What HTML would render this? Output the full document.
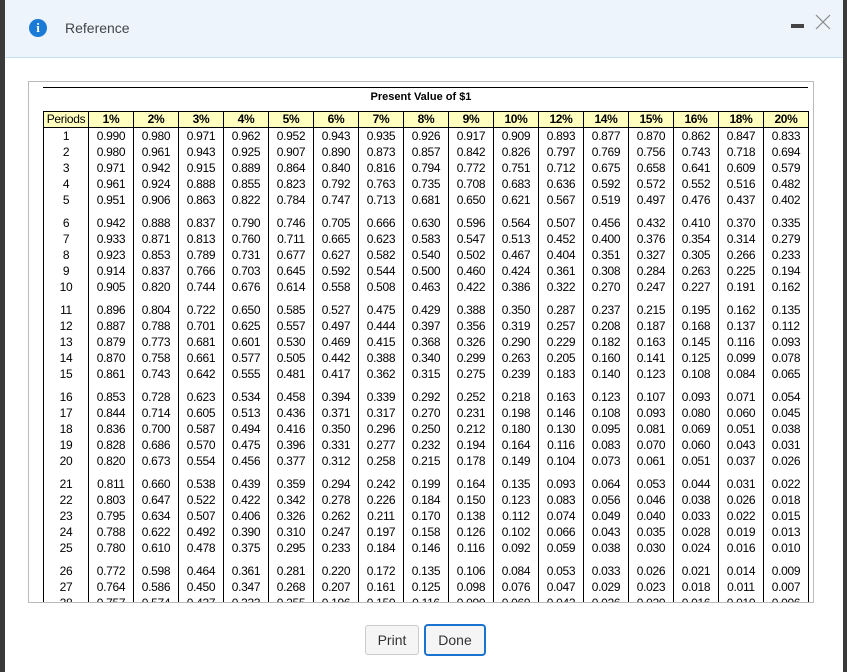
<!DOCTYPE html>
<html><head><style>
body{margin:0;width:847px;height:672px;overflow:hidden;background:#fff;font-family:"Liberation Sans",Arial,sans-serif;position:relative}
.lstrip{position:absolute;left:0;top:0;width:5px;height:672px;background:#3a3a3a}
.rstrip{position:absolute;right:0;top:0;width:4px;height:672px;background:#3a3a3a}
.hdr{position:absolute;left:5px;top:0;width:838px;height:57px;background:#eef4fb;border-bottom:1px solid #c6e0f7}
.icon{position:absolute;left:24px;top:19px;width:18px;height:18px;border-radius:50%;background:#1a7bd6;color:#fff;font:bold 13px "Liberation Serif",serif;text-align:center;line-height:18px}
.ttl{position:absolute;left:60px;top:20px;font-size:14px;color:#444}
.min{position:absolute;left:786px;top:24px;width:13px;height:4px;background:#444}
.frame{position:absolute;left:28px;top:81px;width:784px;height:520px;border:1px solid #bbb;overflow:hidden;background:#fff}
.line{position:absolute;left:14px;top:5px;width:765px;height:1px;background:#000}
.cap{position:absolute;left:0;width:784px;top:9px;text-align:center;font-weight:bold;font-size:11px}
table{position:absolute;left:14px;top:29px;border-collapse:collapse;font-size:12px;letter-spacing:-0.3px}
td{width:44px;padding:0;text-align:center;border-left:1px solid #000;border-right:1px solid #000;height:16px;line-height:16px}
td:first-child{width:44px}
tr.h td{background:#ffffc0;font-weight:bold;border:1px solid #000;height:15px;line-height:15px}
tr.h td:first-child{font-weight:normal}
tr.g td{height:7px;line-height:7px}
.btn{position:absolute;font-size:14px;color:#333;text-align:center;background:#f5f5f5;border-radius:3px}
</style></head><body>
<div class="lstrip"></div><div class="rstrip"></div>
<div class="hdr"><div class="icon">i</div><div class="ttl">Reference</div><div class="min"></div>
<svg style="position:absolute;left:810px;top:14px" width="16" height="16"><path d="M1 1L15 15M15 1L1 15" stroke="#888" stroke-width="1.2"/></svg></div>
<div class="frame"><div class="line"></div><div class="cap">Present Value of $1</div>
<table id="t"><tr class="h"><td>Periods</td><td>1%</td><td>2%</td><td>3%</td><td>4%</td><td>5%</td><td>6%</td><td>7%</td><td>8%</td><td>9%</td><td>10%</td><td>12%</td><td>14%</td><td>15%</td><td>16%</td><td>18%</td><td>20%</td></tr>
<tr><td>1</td><td>0.990</td><td>0.980</td><td>0.971</td><td>0.962</td><td>0.952</td><td>0.943</td><td>0.935</td><td>0.926</td><td>0.917</td><td>0.909</td><td>0.893</td><td>0.877</td><td>0.870</td><td>0.862</td><td>0.847</td><td>0.833</td></tr>
<tr><td>2</td><td>0.980</td><td>0.961</td><td>0.943</td><td>0.925</td><td>0.907</td><td>0.890</td><td>0.873</td><td>0.857</td><td>0.842</td><td>0.826</td><td>0.797</td><td>0.769</td><td>0.756</td><td>0.743</td><td>0.718</td><td>0.694</td></tr>
<tr><td>3</td><td>0.971</td><td>0.942</td><td>0.915</td><td>0.889</td><td>0.864</td><td>0.840</td><td>0.816</td><td>0.794</td><td>0.772</td><td>0.751</td><td>0.712</td><td>0.675</td><td>0.658</td><td>0.641</td><td>0.609</td><td>0.579</td></tr>
<tr><td>4</td><td>0.961</td><td>0.924</td><td>0.888</td><td>0.855</td><td>0.823</td><td>0.792</td><td>0.763</td><td>0.735</td><td>0.708</td><td>0.683</td><td>0.636</td><td>0.592</td><td>0.572</td><td>0.552</td><td>0.516</td><td>0.482</td></tr>
<tr><td>5</td><td>0.951</td><td>0.906</td><td>0.863</td><td>0.822</td><td>0.784</td><td>0.747</td><td>0.713</td><td>0.681</td><td>0.650</td><td>0.621</td><td>0.567</td><td>0.519</td><td>0.497</td><td>0.476</td><td>0.437</td><td>0.402</td></tr>
<tr class="g"><td></td><td></td><td></td><td></td><td></td><td></td><td></td><td></td><td></td><td></td><td></td><td></td><td></td><td></td><td></td><td></td><td></td></tr>
<tr><td>6</td><td>0.942</td><td>0.888</td><td>0.837</td><td>0.790</td><td>0.746</td><td>0.705</td><td>0.666</td><td>0.630</td><td>0.596</td><td>0.564</td><td>0.507</td><td>0.456</td><td>0.432</td><td>0.410</td><td>0.370</td><td>0.335</td></tr>
<tr><td>7</td><td>0.933</td><td>0.871</td><td>0.813</td><td>0.760</td><td>0.711</td><td>0.665</td><td>0.623</td><td>0.583</td><td>0.547</td><td>0.513</td><td>0.452</td><td>0.400</td><td>0.376</td><td>0.354</td><td>0.314</td><td>0.279</td></tr>
<tr><td>8</td><td>0.923</td><td>0.853</td><td>0.789</td><td>0.731</td><td>0.677</td><td>0.627</td><td>0.582</td><td>0.540</td><td>0.502</td><td>0.467</td><td>0.404</td><td>0.351</td><td>0.327</td><td>0.305</td><td>0.266</td><td>0.233</td></tr>
<tr><td>9</td><td>0.914</td><td>0.837</td><td>0.766</td><td>0.703</td><td>0.645</td><td>0.592</td><td>0.544</td><td>0.500</td><td>0.460</td><td>0.424</td><td>0.361</td><td>0.308</td><td>0.284</td><td>0.263</td><td>0.225</td><td>0.194</td></tr>
<tr><td>10</td><td>0.905</td><td>0.820</td><td>0.744</td><td>0.676</td><td>0.614</td><td>0.558</td><td>0.508</td><td>0.463</td><td>0.422</td><td>0.386</td><td>0.322</td><td>0.270</td><td>0.247</td><td>0.227</td><td>0.191</td><td>0.162</td></tr>
<tr class="g"><td></td><td></td><td></td><td></td><td></td><td></td><td></td><td></td><td></td><td></td><td></td><td></td><td></td><td></td><td></td><td></td><td></td></tr>
<tr><td>11</td><td>0.896</td><td>0.804</td><td>0.722</td><td>0.650</td><td>0.585</td><td>0.527</td><td>0.475</td><td>0.429</td><td>0.388</td><td>0.350</td><td>0.287</td><td>0.237</td><td>0.215</td><td>0.195</td><td>0.162</td><td>0.135</td></tr>
<tr><td>12</td><td>0.887</td><td>0.788</td><td>0.701</td><td>0.625</td><td>0.557</td><td>0.497</td><td>0.444</td><td>0.397</td><td>0.356</td><td>0.319</td><td>0.257</td><td>0.208</td><td>0.187</td><td>0.168</td><td>0.137</td><td>0.112</td></tr>
<tr><td>13</td><td>0.879</td><td>0.773</td><td>0.681</td><td>0.601</td><td>0.530</td><td>0.469</td><td>0.415</td><td>0.368</td><td>0.326</td><td>0.290</td><td>0.229</td><td>0.182</td><td>0.163</td><td>0.145</td><td>0.116</td><td>0.093</td></tr>
<tr><td>14</td><td>0.870</td><td>0.758</td><td>0.661</td><td>0.577</td><td>0.505</td><td>0.442</td><td>0.388</td><td>0.340</td><td>0.299</td><td>0.263</td><td>0.205</td><td>0.160</td><td>0.141</td><td>0.125</td><td>0.099</td><td>0.078</td></tr>
<tr><td>15</td><td>0.861</td><td>0.743</td><td>0.642</td><td>0.555</td><td>0.481</td><td>0.417</td><td>0.362</td><td>0.315</td><td>0.275</td><td>0.239</td><td>0.183</td><td>0.140</td><td>0.123</td><td>0.108</td><td>0.084</td><td>0.065</td></tr>
<tr class="g"><td></td><td></td><td></td><td></td><td></td><td></td><td></td><td></td><td></td><td></td><td></td><td></td><td></td><td></td><td></td><td></td><td></td></tr>
<tr><td>16</td><td>0.853</td><td>0.728</td><td>0.623</td><td>0.534</td><td>0.458</td><td>0.394</td><td>0.339</td><td>0.292</td><td>0.252</td><td>0.218</td><td>0.163</td><td>0.123</td><td>0.107</td><td>0.093</td><td>0.071</td><td>0.054</td></tr>
<tr><td>17</td><td>0.844</td><td>0.714</td><td>0.605</td><td>0.513</td><td>0.436</td><td>0.371</td><td>0.317</td><td>0.270</td><td>0.231</td><td>0.198</td><td>0.146</td><td>0.108</td><td>0.093</td><td>0.080</td><td>0.060</td><td>0.045</td></tr>
<tr><td>18</td><td>0.836</td><td>0.700</td><td>0.587</td><td>0.494</td><td>0.416</td><td>0.350</td><td>0.296</td><td>0.250</td><td>0.212</td><td>0.180</td><td>0.130</td><td>0.095</td><td>0.081</td><td>0.069</td><td>0.051</td><td>0.038</td></tr>
<tr><td>19</td><td>0.828</td><td>0.686</td><td>0.570</td><td>0.475</td><td>0.396</td><td>0.331</td><td>0.277</td><td>0.232</td><td>0.194</td><td>0.164</td><td>0.116</td><td>0.083</td><td>0.070</td><td>0.060</td><td>0.043</td><td>0.031</td></tr>
<tr><td>20</td><td>0.820</td><td>0.673</td><td>0.554</td><td>0.456</td><td>0.377</td><td>0.312</td><td>0.258</td><td>0.215</td><td>0.178</td><td>0.149</td><td>0.104</td><td>0.073</td><td>0.061</td><td>0.051</td><td>0.037</td><td>0.026</td></tr>
<tr class="g"><td></td><td></td><td></td><td></td><td></td><td></td><td></td><td></td><td></td><td></td><td></td><td></td><td></td><td></td><td></td><td></td><td></td></tr>
<tr><td>21</td><td>0.811</td><td>0.660</td><td>0.538</td><td>0.439</td><td>0.359</td><td>0.294</td><td>0.242</td><td>0.199</td><td>0.164</td><td>0.135</td><td>0.093</td><td>0.064</td><td>0.053</td><td>0.044</td><td>0.031</td><td>0.022</td></tr>
<tr><td>22</td><td>0.803</td><td>0.647</td><td>0.522</td><td>0.422</td><td>0.342</td><td>0.278</td><td>0.226</td><td>0.184</td><td>0.150</td><td>0.123</td><td>0.083</td><td>0.056</td><td>0.046</td><td>0.038</td><td>0.026</td><td>0.018</td></tr>
<tr><td>23</td><td>0.795</td><td>0.634</td><td>0.507</td><td>0.406</td><td>0.326</td><td>0.262</td><td>0.211</td><td>0.170</td><td>0.138</td><td>0.112</td><td>0.074</td><td>0.049</td><td>0.040</td><td>0.033</td><td>0.022</td><td>0.015</td></tr>
<tr><td>24</td><td>0.788</td><td>0.622</td><td>0.492</td><td>0.390</td><td>0.310</td><td>0.247</td><td>0.197</td><td>0.158</td><td>0.126</td><td>0.102</td><td>0.066</td><td>0.043</td><td>0.035</td><td>0.028</td><td>0.019</td><td>0.013</td></tr>
<tr><td>25</td><td>0.780</td><td>0.610</td><td>0.478</td><td>0.375</td><td>0.295</td><td>0.233</td><td>0.184</td><td>0.146</td><td>0.116</td><td>0.092</td><td>0.059</td><td>0.038</td><td>0.030</td><td>0.024</td><td>0.016</td><td>0.010</td></tr>
<tr class="g"><td></td><td></td><td></td><td></td><td></td><td></td><td></td><td></td><td></td><td></td><td></td><td></td><td></td><td></td><td></td><td></td><td></td></tr>
<tr><td>26</td><td>0.772</td><td>0.598</td><td>0.464</td><td>0.361</td><td>0.281</td><td>0.220</td><td>0.172</td><td>0.135</td><td>0.106</td><td>0.084</td><td>0.053</td><td>0.033</td><td>0.026</td><td>0.021</td><td>0.014</td><td>0.009</td></tr>
<tr><td>27</td><td>0.764</td><td>0.586</td><td>0.450</td><td>0.347</td><td>0.268</td><td>0.207</td><td>0.161</td><td>0.125</td><td>0.098</td><td>0.076</td><td>0.047</td><td>0.029</td><td>0.023</td><td>0.018</td><td>0.011</td><td>0.007</td></tr>
<tr><td>28</td><td>0.757</td><td>0.574</td><td>0.437</td><td>0.333</td><td>0.255</td><td>0.196</td><td>0.150</td><td>0.116</td><td>0.090</td><td>0.069</td><td>0.042</td><td>0.026</td><td>0.020</td><td>0.016</td><td>0.010</td><td>0.006</td></tr>
</table></div>
<div class="btn" style="left:365px;top:625px;width:52px;height:28px;line-height:28px;border:1px solid #ccc">Print</div>
<div class="btn" style="left:424px;top:624px;width:58px;height:28px;line-height:28px;border:2px solid #1a73d0;border-radius:4px">Done</div>
</body></html>
